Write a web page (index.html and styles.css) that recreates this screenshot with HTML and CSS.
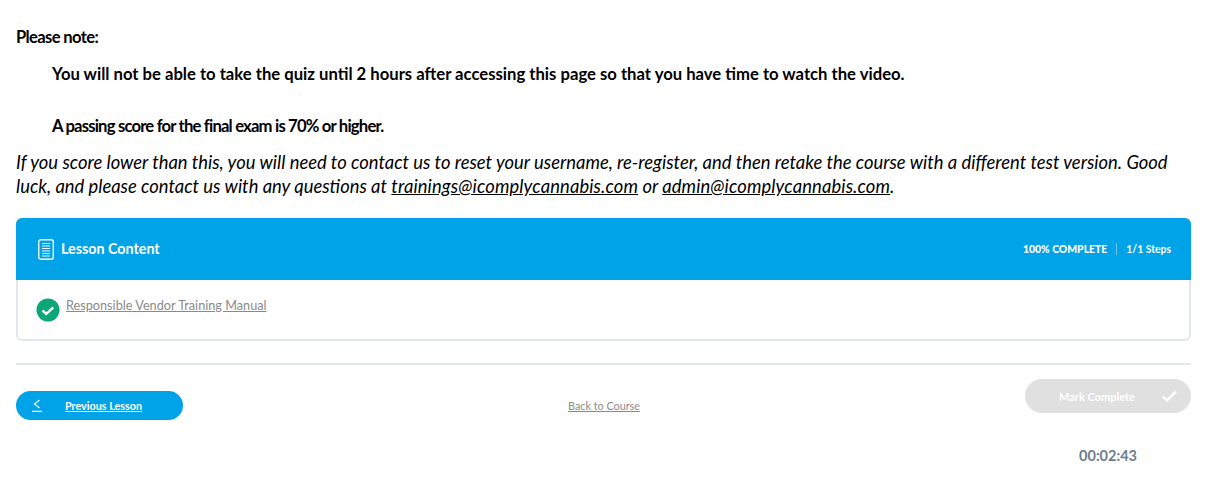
FILE: index.html
```html
<!DOCTYPE html>
<html lang="en">
<head>
  <meta charset="UTF-8">
  <title>Responsible Vendor Training Manual</title>
  <link rel="stylesheet" href="styles.css">
</head>
<body>
  <div class="page">
    <p class="note-title">Please note:</p>
    <p class="note-line">You will not be able to take the quiz until 2 hours after accessing this page so that you have time to watch the video.</p>
    <p class="note-line tight">A passing score for the final exam is 70% or higher.</p>
    <p class="note-body">If you score lower than this, you will need to contact us to reset your username, re-register, and then retake the course with a different test version. Good luck, and please contact us with any questions at <a href="#">trainings@icomplycannabis.com</a> or <a href="#">admin@icomplycannabis.com</a>.</p>

    <div class="lesson-box">
      <div class="lesson-head">
        <div class="lesson-title">
          <svg class="doc-icon" width="16" height="21" viewBox="0 0 16 21" fill="none" stroke="#fff">
            <rect x="0.75" y="0.75" width="14.5" height="19.5" rx="2" stroke-width="1.3"/>
            <path d="M4 4.5h8M4 7h8M4 9.5h8M4 12h8M4 14.5h8M4 17h8" stroke-width="0.9"/>
          </svg>
          <span class="title-text">Lesson Content</span>
        </div>
        <div class="lesson-stats">
          <span class="complete">100% COMPLETE</span>
          <span class="steps">1/1 Steps</span>
        </div>
      </div>
      <div class="lesson-row">
        <svg class="check-icon" width="24" height="24" viewBox="0 0 24 24">
          <circle cx="12" cy="12" r="11.5" fill="#0ca678"/>
          <path d="M6.5 12.5l3.8 3.4 7-6.6" fill="none" stroke="#fff" stroke-width="2.4"/>
        </svg>
        <a href="#">Responsible Vendor Training Manual</a>
      </div>
    </div>

    <div class="lesson-nav">
      <a class="prev-btn" href="#">
        <svg class="arrow" width="10" height="13" viewBox="0 0 10 13" fill="none" stroke="#fff" stroke-width="1.2">
          <path d="M7.5 1L2.5 5l5 4M0 12.4h10"/>
        </svg>
        <span>Previous Lesson</span>
      </a>
      <a class="back-link" href="#">Back to Course</a>
      <button class="mark-btn" type="button" disabled>
        <span>Mark Complete</span>
        <svg width="15" height="12" viewBox="0 0 15 12" fill="none" stroke="#fff" stroke-width="2.4"><path d="M1 6.5l4 3.8L14 1.5"/></svg>
      </button>
    </div>

    <div class="timer">00:02:43</div>
  </div>
</body>
</html>
```

FILE: styles.css
```css
body {
  margin: 0;
  font-family: Lato, "Open Sans", sans-serif;
  color: #000;
  background: #fff;
}
.page {
  padding: 27px 20px 0 16px;
}
p {
  margin: 0;
}
.note-title {
  font-size: 16.6px;
  line-height: 20px;
  font-weight: 700;
  letter-spacing: -0.65px;
}
.note-line {
  margin: 17px 0 0 36px;
  font-size: 16.66px;
  line-height: 20px;
  font-weight: 700;
}
.note-line.tight {
  margin-top: 32px;
  letter-spacing: -0.82px;
}
.note-body {
  margin-top: 14px;
  font-size: 18.4px;
  line-height: 24px;
  font-style: italic;
}
.note-body a {
  color: #000;
  letter-spacing: 0.12px;
}
.lesson-box {
  margin-top: 20px;
  border-radius: 6px;
  border: 2px solid #e2e7ed;
  border-top: 0;
}
.lesson-head {
  margin: 0 -2px;
  height: 62px;
  padding: 0 20px;
  display: flex;
  align-items: center;
  justify-content: space-between;
  background: #00a2e8;
  border-radius: 6px 6px 0 0;
  color: #fff;
}
.lesson-title {
  display: flex;
  align-items: center;
  gap: 7px;
  font-size: 14.3px;
  font-weight: 700;
}
.title-text {
  margin-bottom: 2px;
}
.doc-icon {
  margin-left: 2px;
}
.lesson-stats {
  display: flex;
  align-items: center;
  font-size: 10.4px;
}
.complete {
  font-weight: 900;
  padding-right: 9px;
  border-right: 1px solid rgba(255, 255, 255, 0.4);
}
.steps {
  font-weight: 700;
  padding-left: 9px;
}
.lesson-row {
  height: 59px;
  padding: 0 18px;
  display: flex;
  align-items: center;
  gap: 6px;
  font-size: 12.7px;
}
.lesson-row a {
  color: #8a8a8a;
  margin-bottom: 10px;
}
.check-icon {
  flex: none;
}
.lesson-nav {
  margin-top: 22px;
  padding-top: 14px;
  border-top: 2px solid #e2e7ed;
  display: flex;
  align-items: flex-start;
  justify-content: space-between;
}
.prev-btn {
  margin-top: 12px;
  width: 167px;
  height: 29px;
  box-sizing: border-box;
  padding-left: 16px;
  display: flex;
  align-items: center;
  border-radius: 15px;
  background: #00a2e8;
  color: #fff;
  font-size: 10.8px;
  font-weight: 700;
}
.arrow {
  flex: none;
  margin-right: 23px;
}
.back-link {
  margin-top: 20px;
  color: #8a8a8a;
  font-size: 10.8px;
}
.mark-btn {
  width: 166px;
  height: 34px;
  padding: 0 14px 0 34px;
  display: flex;
  align-items: center;
  justify-content: space-between;
  border: 0;
  border-radius: 17px;
  background: #e0e0e0;
  color: #fff;
  font-family: inherit;
  font-size: 11px;
  font-weight: 700;
}
.timer {
  margin: 27px 54px 0 0;
  text-align: right;
  font-size: 14.5px;
  font-weight: 700;
  color: #6d7e88;
}
```
